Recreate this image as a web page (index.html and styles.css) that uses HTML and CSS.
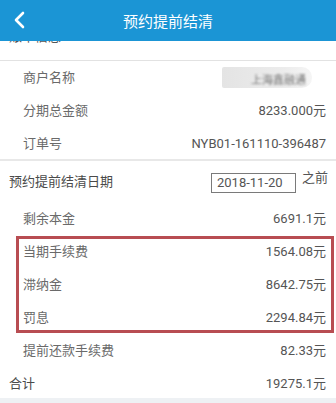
FILE: index.html
```html
<!DOCTYPE html>
<html lang="zh">
<head>
<meta charset="utf-8">
<link rel="stylesheet" href="styles.css">
</head>
<body>
<div class="screen">
  <header class="topbar">
    <svg class="back" width="14" height="20" viewBox="0 0 14 20"><path d="M11 3 L4 10 L11 17" fill="none" stroke="#fff" stroke-width="2.6" stroke-linecap="round" stroke-linejoin="round"/></svg>
    <div class="title">预约提前结清</div>
  </header>
  <div class="content">
    <div class="sec-title">账单信息</div>
    <div class="row"><span class="label">商户名称</span><span class="blurred"><span class="blur-text">上海鑫融通</span></span></div>
    <div class="row"><span class="label">分期总金额</span><span class="value">8233.000元</span></div>
    <div class="row"><span class="label">订单号</span><span class="value">NYB01-161110-396487</span></div>
    <div class="band"></div>
    <div class="date-row"><span class="head">预约提前结清日期</span><span class="date-wrap"><span class="date-box">2018-11-20</span><span class="before">之前</span></span></div>
    <div class="row"><span class="label">剩余本金</span><span class="value">6691.1元</span></div>
    <div class="row"><span class="label">当期手续费</span><span class="value">1564.08元</span></div>
    <div class="row"><span class="label">滞纳金</span><span class="value">8642.75元</span></div>
    <div class="row"><span class="label">罚息</span><span class="value">2294.84元</span></div>
    <div class="row"><span class="label">提前还款手续费</span><span class="value">82.33元</span></div>
    <div class="row total"><span class="head">合计</span><span class="value">19275.1元</span></div>
    <div class="bottom-band"></div>
  </div>
  <div class="mark"></div>
</div>
</body>
</html>
```
FILE: styles.css
```css
* { box-sizing: border-box; }
html, body { margin: 0; padding: 0; background: #fff; }
body {
  font-family: Roboto, "Noto Sans CJK SC", sans-serif;
  font-size: 13px;
  width: 336px;
  height: 403px;
  overflow: hidden;
}
.screen { position: relative; width: 336px; height: 403px; overflow: hidden; }
.topbar {
  position: absolute;
  top: 0; left: 0; right: 0;
  height: 41px;
  background: #1b95d5;
  display: flex;
  align-items: center;
  justify-content: center;
  z-index: 2;
}
.back { position: absolute; left: 12px; top: 10px; }
.title {
  color: #fff;
  font-family: "Noto Sans CJK SC", sans-serif;
  font-size: 15px;
  line-height: 20px;
  margin-top: 1px;
}
.content { display: flex; flex-direction: column; }
.sec-title {
  height: 61px;
  padding: 29px 0 0 9px;
  line-height: 16px;
  color: #555;
  border-bottom: 1px solid #e2e2e2;
}
.row {
  height: 33px;
  display: flex;
  align-items: center;
  justify-content: space-between;
  padding: 0 10px 0 23px;
  line-height: 16px;
}
.label { color: #6a6a6a; }
.value { color: #555; }
.head { color: #4a4a4a; }
.row.total { padding-left: 9px; }
.blurred {
  width: 90px;
  height: 21px;
  margin-right: 14px;
  background: linear-gradient(90deg, #e4e4e4, #ececec 70%, #f5f5f5);
  border-radius: 2px 10px 10px 2px;
  display: flex;
  align-items: flex-end;
  justify-content: flex-end;
  overflow: hidden;
}
.blur-text {
  color: #777;
  font-size: 11px;
  line-height: 12px;
  filter: blur(0.9px);
  margin-right: 6px;
  margin-bottom: 1px;
}
.band { height: 2px; background: #e8e8e8; margin-top: -1px; }
.date-row {
  height: 41px;
  display: flex;
  align-items: center;
  justify-content: space-between;
  padding: 0 8px 0 9px;
  line-height: 16px;
}
.date-wrap { display: flex; align-items: flex-start; gap: 6px; }
.date-box {
  width: 85px;
  height: 20px;
  border: 1px solid #7a7a7a;
  padding: 1px 0 0 5px;
  color: #555;
  line-height: 16px;
  margin-top: 3px;
}
.before { color: #555; }
.bottom-band { height: 6px; background: #eef1f4; margin-top: -2px; }
.mark {
  position: absolute;
  left: 16px;
  top: 236px;
  width: 318px;
  height: 97px;
  border: 3px solid #b84d52;
  z-index: 1;
}
```
